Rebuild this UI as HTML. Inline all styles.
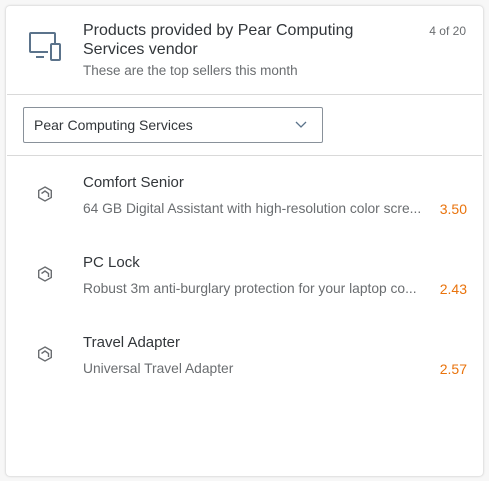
<!DOCTYPE html>
<html><head><style>
body{margin:0;width:489px;height:481px;background:#f7f7f7;font-family:"Liberation Sans",sans-serif;position:relative;overflow:hidden}
.card{position:absolute;left:5px;top:5px;width:477px;height:470px;background:#fff;border:1px solid #e4e4e4;border-radius:5px;box-shadow:0 0 2px rgba(0,0,0,.08)}
.t{position:absolute;white-space:nowrap}
.hr{position:absolute;left:1px;right:1px;height:1px;background:#d9d9d9}
.title{left:77px;top:15px;font-size:16px;line-height:19px;color:#32363a}
.sub{left:77px;top:57px;font-size:13.5px;color:#6a6d70}
.cnt{right:17px;top:18px;font-size:12px;color:#6a6d70}
.dd{position:absolute;left:17px;top:101px;width:298px;height:34px;border:1px solid #89919a;border-radius:2px}
.it{font-size:15px;color:#32363a;left:77px}
.ds{font-size:13.8px;color:#6a6d70;left:77px}
.pr{font-size:14px;color:#e9730c;right:16px}
</style></head><body>
<div class="card">
<svg style="position:absolute;left:22px;top:25px" width="38" height="32" viewBox="0 0 38 32" fill="none" stroke="#5b738b" stroke-width="2"><path d="M27 12V3a1 1 0 0 0-1-1H3a1 1 0 0 0-1 1v17a1 1 0 0 0 1 1h17"/><path d="M8 26h8"/><rect x="23" y="13" width="9" height="16" rx="1"/></svg>
<div class="t title">Products provided by Pear Computing<br>Services vendor</div>
<div class="t sub">These are the top sellers this month</div>
<div class="t cnt">4 of 20</div>
<div class="hr" style="top:88px"></div>
<div class="dd"><div class="t" style="left:10px;top:9px;font-size:14px;color:#32363a">Pear Computing Services</div>
<svg style="position:absolute;left:271px;top:13px" width="12" height="8" viewBox="0 0 12 8" fill="none" stroke="#5b738b" stroke-width="1.3"><path d="M1 1l5 5 5-5"/></svg></div>
<div class="hr" style="top:149px"></div>

<svg style="position:absolute;left:31px;top:180px" width="16" height="16" viewBox="0 0 16 16" fill="none" stroke="#6a6d70" stroke-width="1.4"><path d="M8 1l6.3 3.5v7L8 15 1.7 11.5v-7z"/><path d="M4.5 7.5l3.5-2.5 3.5 2.5v3.5"/></svg>
<div class="t it" style="top:168px">Comfort Senior</div>
<div class="t ds" style="top:195px">64 GB Digital Assistant with high-resolution color scre...</div>
<div class="t pr" style="top:195px">3.50</div>

<svg style="position:absolute;left:31px;top:260px" width="16" height="16" viewBox="0 0 16 16" fill="none" stroke="#6a6d70" stroke-width="1.4"><path d="M8 1l6.3 3.5v7L8 15 1.7 11.5v-7z"/><path d="M4.5 7.5l3.5-2.5 3.5 2.5v3.5"/></svg>
<div class="t it" style="top:248px">PC Lock</div>
<div class="t ds" style="top:275px">Robust 3m anti-burglary protection for your laptop co...</div>
<div class="t pr" style="top:275px">2.43</div>

<svg style="position:absolute;left:31px;top:340px" width="16" height="16" viewBox="0 0 16 16" fill="none" stroke="#6a6d70" stroke-width="1.4"><path d="M8 1l6.3 3.5v7L8 15 1.7 11.5v-7z"/><path d="M4.5 7.5l3.5-2.5 3.5 2.5v3.5"/></svg>
<div class="t it" style="top:328px">Travel Adapter</div>
<div class="t ds" style="top:355px">Universal Travel Adapter</div>
<div class="t pr" style="top:355px">2.57</div>
</div>
</body></html>
